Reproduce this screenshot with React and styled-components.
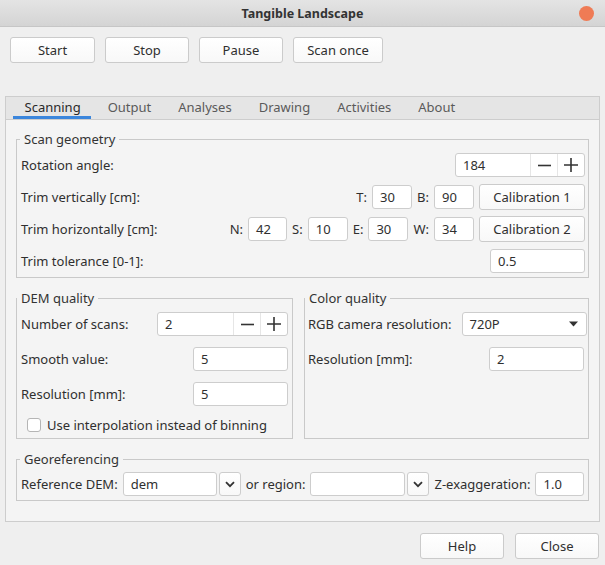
import React from 'react';
import styled, { createGlobalStyle } from 'styled-components';

const GlobalStyle = createGlobalStyle`
  body {
    margin: 0;
    background: #efefef;
    font-family: "Noto Sans", "DejaVu Sans", sans-serif;
    font-size: 13px;
    color: #2f2f2f;
  }
  * {
    box-sizing: border-box;
  }
`;

const Window = styled.div`
  width: 605px;
  height: 565px;
  display: flex;
  flex-direction: column;
  background: #efefef;
`;

const TitleBar = styled.div`
  height: 27px;
  flex: none;
  display: grid;
  grid-template-columns: 1fr auto 1fr;
  align-items: center;
  background: linear-gradient(#e4e4e4, #d4d4d4);
  border-bottom: 1px solid #c6c6c6;
`;

const Title = styled.div`
  grid-column: 2;
  font-weight: bold;
  font-size: 12.5px;
  color: #333;
`;

const CloseDot = styled.div`
  justify-self: end;
  margin-right: 11px;
  width: 15px;
  height: 15px;
  border-radius: 50%;
  background: #ef7b55;
`;

const Toolbar = styled.div`
  display: flex;
  gap: 10px;
  padding: 10px 10px 0;
  height: 69px;
  flex: none;
  align-items: flex-start;
`;

const Button = styled.button`
  height: 26px;
  min-width: ${p => p.$w || 84}px;
  padding: 0 12px;
  font: inherit;
  color: #2f2f2f;
  background: linear-gradient(#ffffff, #f8f8f8);
  border: 1px solid #cbcbcb;
  border-radius: 3px;
  flex: none;
`;

const TabWidget = styled.div`
  flex: 1;
  margin: 0 5px;
  display: flex;
  flex-direction: column;
  min-height: 0;
`;

const TabBar = styled.div`
  height: 23px;
  flex: none;
  display: flex;
  padding-left: 5px;
  background: #e5e5e5;
  border: 1px solid #cdcdcd;
  border-bottom: none;
`;

const Tab = styled.div`
  position: relative;
  padding: 0 13.5px;
  line-height: 21px;
  color: ${p => (p.$active ? '#2a2a2a' : '#5a5a5a')};
  &::after {
    content: "";
    display: ${p => (p.$active ? 'block' : 'none')};
    position: absolute;
    left: 2px;
    right: 3px;
    bottom: 0;
    height: 3px;
    background: #3b86dc;
  }
`;

const Panel = styled.div`
  flex: 1;
  min-height: 0;
  background: #f4f4f4;
  border: 1px solid #cdcdcd;
  padding: 10px 10px 0;
  display: flex;
  flex-direction: column;
  gap: 11px;
`;

const Group = styled.fieldset`
  margin: 0;
  border: 1px solid #c9c9c9;
  padding: ${p => p.$pad || '4px 3px 3px 4px'};
  min-width: 0;
  display: flex;
  flex-direction: column;
  gap: ${p => p.$gap || 6}px;
`;

const Legend = styled.legend`
  padding: 0 4px;
  margin-left: ${p => p.$indent ?? 0}px;
  line-height: 18px;
  color: #333;
`;

const Row = styled.div`
  height: ${p => p.$h || 26}px;
  display: flex;
  align-items: center;
  gap: ${p => p.$gap || 5}px;
`;

const Label = styled.span`
  white-space: nowrap;
`;

const Spacer = styled.div`
  flex: 1;
`;

const Input = styled.div`
  width: ${p => (p.$w ? `${p.$w}px` : 'auto')};
  flex: ${p => (p.$w ? 'none' : '1')};
  height: 24px;
  display: flex;
  align-items: center;
  padding-left: 7px;
  background: #fff;
  border: 1px solid #cdcdcd;
  border-radius: 3px;
`;

const SpinBox = styled.div`
  width: ${p => p.$w}px;
  height: 24px;
  flex: none;
  display: flex;
  background: #fff;
  border: 1px solid #cdcdcd;
  border-radius: 3px;
`;

const SpinText = styled.div`
  flex: 1;
  display: flex;
  align-items: center;
  padding-left: 7px;
`;

const SpinBtn = styled.div`
  width: 27px;
  display: flex;
  align-items: center;
  justify-content: center;
  border-left: 1px solid #e6e6e6;
`;

const Combo = styled.div`
  width: ${p => p.$w}px;
  height: 24px;
  flex: none;
  display: flex;
  align-items: center;
  justify-content: space-between;
  padding: 0 8px 0 7px;
  background: #fff;
  border: 1px solid #cdcdcd;
  border-radius: 3px;
`;

const ComboGroup = styled.div`
  display: flex;
  gap: 2px;
  flex: none;
`;

const ArrowBtn = styled.div`
  width: 22px;
  height: 24px;
  display: flex;
  align-items: center;
  justify-content: center;
  background: linear-gradient(#ffffff, #f8f8f8);
  border: 1px solid #cdcdcd;
  border-radius: 3px;
`;

const Columns = styled.div`
  display: grid;
  grid-template-columns: 277px 1fr;
  gap: 11px;
`;

const CheckRow = styled.label`
  height: 16px;
  display: flex;
  align-items: center;
  gap: 6px;
  padding-left: 6px;
`;

const CheckBox = styled.span`
  width: 14px;
  height: 14px;
  border: 1px solid #b5b5b5;
  border-radius: 3px;
  background: #fff;
`;

const Footer = styled.div`
  height: 43px;
  flex: none;
  display: flex;
  justify-content: flex-end;
  gap: 11px;
  padding: 11px 6px 6px;
`;

const Minus = () => (
  <svg width="13" height="13" viewBox="0 0 13 13">
    <path d="M0 6.5H13" stroke="#333" strokeWidth="1.6" />
  </svg>
);

const Plus = () => (
  <svg width="14" height="14" viewBox="0 0 14 14">
    <path d="M0 7H14M7 0V14" stroke="#333" strokeWidth="1.6" />
  </svg>
);

const Spin = ({ value, w }) => (
  <SpinBox $w={w}>
    <SpinText>{value}</SpinText>
    <SpinBtn><Minus /></SpinBtn>
    <SpinBtn><Plus /></SpinBtn>
  </SpinBox>
);

const Caret = () => (
  <svg width="9" height="6" viewBox="0 0 9 6">
    <path d="M0 0.5H9L4.5 5.5Z" fill="#333" />
  </svg>
);

const Chevron = () => (
  <svg width="10" height="7" viewBox="0 0 10 7">
    <path d="M1 1.2L5 5.2L9 1.2" stroke="#333" strokeWidth="1.8" fill="none" />
  </svg>
);

const tabs = ['Scanning', 'Output', 'Analyses', 'Drawing', 'Activities', 'About'];

export default function App() {
  return (
    <Window>
      <GlobalStyle />
      <TitleBar>
        <Title>Tangible Landscape</Title>
        <CloseDot />
      </TitleBar>
      <Toolbar>
        <Button $w={85}>Start</Button>
        <Button>Stop</Button>
        <Button>Pause</Button>
        <Button $w={90}>Scan once</Button>
      </Toolbar>
      <TabWidget>
        <TabBar>
          {tabs.map((t, i) => (
            <Tab key={t} $active={i === 0}>{t}</Tab>
          ))}
        </TabBar>
        <Panel>
          <Group>
            <Legend $indent={-1}>Scan geometry</Legend>
            <Row>
              <Label>Rotation angle:</Label>
              <Spacer />
              <Spin value="184" w={130} />
            </Row>
            <Row>
              <Label>Trim vertically [cm]:</Label>
              <Spacer />
              <Label>T:</Label>
              <Input $w={40}>30</Input>
              <Label>B:</Label>
              <Input $w={40}>90</Input>
              <Button $w={106}>Calibration 1</Button>
            </Row>
            <Row>
              <Label>Trim horizontally [cm]:</Label>
              <Spacer />
              <Label>N:</Label>
              <Input $w={39}>42</Input>
              <Label>S:</Label>
              <Input $w={40}>10</Input>
              <Label>E:</Label>
              <Input $w={40}>30</Input>
              <Label>W:</Label>
              <Input $w={40}>34</Input>
              <Button $w={106}>Calibration 2</Button>
            </Row>
            <Row>
              <Label>Trim tolerance [0-1]:</Label>
              <Spacer />
              <Input $w={95}>0.5</Input>
            </Row>
          </Group>
          <Columns>
            <Group $pad="5px 4px 5px 4px" $gap={11}>
              <Legend $indent={-4}>DEM quality</Legend>
              <Row $h={24}>
                <Label>Number of scans:</Label>
                <Spacer />
                <Spin value="2" w={131} />
              </Row>
              <Row $h={24}>
                <Label>Smooth value:</Label>
                <Spacer />
                <Input $w={95}>5</Input>
              </Row>
              <Row $h={24}>
                <Label>Resolution [mm]:</Label>
                <Spacer />
                <Input $w={95}>5</Input>
              </Row>
              <CheckRow>
                <CheckBox />
                Use interpolation instead of binning
              </CheckRow>
            </Group>
            <Group $pad="5px 4px 3px 3px" $gap={11}>
              <Legend $indent={-3}>Color quality</Legend>
              <Row $h={24}>
                <Label>RGB camera resolution:</Label>
                <Spacer />
                <Combo $w={125}>720P<Caret /></Combo>
              </Row>
              <Row $h={24}>
                <Label>Resolution [mm]:</Label>
                <Spacer />
                <Input $w={95}>2</Input>
              </Row>
            </Group>
          </Columns>
          <Group $pad="4px 4px 4px 4px">
            <Legend $indent={-1}>Georeferencing</Legend>
            <Row $h={24}>
              <Label>Reference DEM:</Label>
              <ComboGroup>
                <Combo $w={94}>dem</Combo>
                <ArrowBtn><Chevron /></ArrowBtn>
              </ComboGroup>
              <Label>or region:</Label>
              <ComboGroup>
                <Combo $w={95} />
                <ArrowBtn><Chevron /></ArrowBtn>
              </ComboGroup>
              <Label>Z-exaggeration:</Label>
              <Input>1.0</Input>
            </Row>
          </Group>
        </Panel>
      </TabWidget>
      <Footer>
        <Button>Help</Button>
        <Button>Close</Button>
      </Footer>
    </Window>
  );
}
